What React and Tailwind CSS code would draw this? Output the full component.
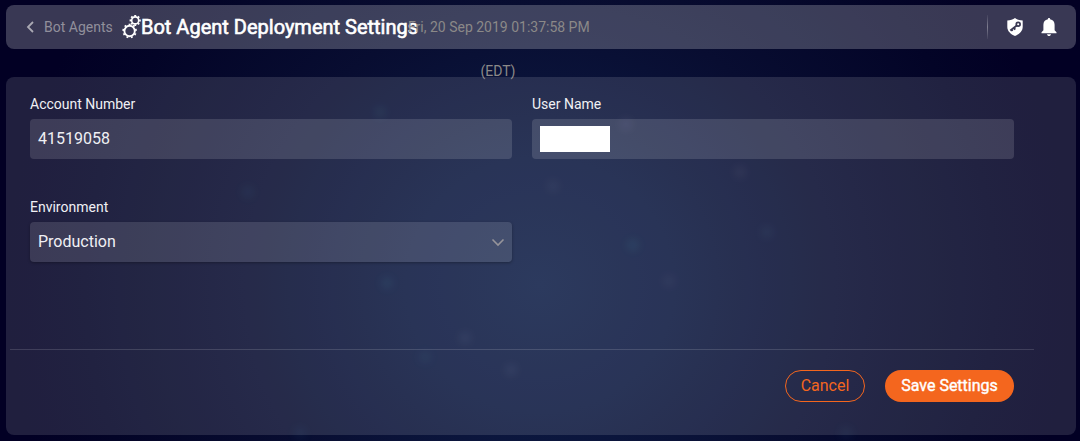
import React from 'react';

function Gear({ cx, cy, r, teeth, width }) {
  const marks = Array.from({ length: teeth }, (_, i) => (i * 360) / teeth);
  return (
    <g stroke="currentColor" fill="none">
      <circle cx={cx} cy={cy} r={r} strokeWidth={width} />
      {marks.map((a) => (
        <path
          key={a}
          d={`M${cx} ${cy - r - 0.4}v-1.7`}
          strokeWidth="2"
          transform={`rotate(${a} ${cx} ${cy})`}
        />
      ))}
    </g>
  );
}

function GearsIcon() {
  return (
    <svg className="h-6 w-[19px] shrink-0" viewBox="0 0 19 24">
      <Gear cx={7.6} cy={16} r={5.2} teeth={9} width={1.9} />
      <Gear cx={13.200} cy={5.400} r={3.500} teeth={8} width={1.600} />
    </svg>
  );
}

function ShieldIcon() {
  return (
    <svg className="h-[18px] w-4" viewBox="0 0 16 18">
      <path d="M8 0 C6 1.6 3.2 2.2 0.3 2.4 V9 C0.3 13 3.6 16.2 8 18 C12.400 16.2 15.700 13 15.700 9 V2.400 C12.800 2.200 10 1.600 8 0Z" fill="white" />
      <g fill="none" stroke="#3a3853">
        <circle cx="11.200" cy="6.200" r="1.900" strokeWidth="1.700" />
        <path d="M9.800 7.600 3.300 12.400M6.900 9.900l1.300 1.700M4.500 11.600l1 1.400" strokeWidth="1.900" />
      </g>
    </svg>
  );
}

function BellIcon() {
  return (
    <svg className="h-[18px] w-4" viewBox="0 0 16 18" fill="white">
      <path d="M8 0C7.300 0 6.900.5 6.900 1.200 4 1.700 2.400 3.800 2.400 6.700V12.200L.5 14.200V15.200H15.500V14.200L13.600 12.200V6.700C13.600 3.800 12 1.700 9.100 1.200 9.100.5 8.700 0 8 0ZM6 16.200C6.200 17.300 7 18 8 18S9.800 17.300 10 16.200Z" />
    </svg>
  );
}

function Header() {
  return (
    <header className="flex h-11 items-center rounded-lg bg-white/22 pl-[19px] pr-[19px]">
      <a className="flex w-[97px] shrink-0 items-center text-[14px] text-[#918f9b]">
        <svg className="mr-[9px] h-3 w-[10px]" viewBox="0 0 10 12" fill="none" stroke="#aaa9b3" strokeWidth="1.8">
          <path d="M8 1 3 6l5 5" />
        </svg>
        <span className="whitespace-nowrap">Bot Agents</span>
      </a>
      <h1 className="flex shrink-0 items-center whitespace-nowrap text-[20px] text-white">
        <GearsIcon />
        <span className="w-[277px] [-webkit-text-stroke:0.600px_white]">Bot Agent Deployment Settings</span>
      </h1>
      <div className="-ml-[10px] h-11 w-[180px] shrink-0 text-center text-[14px] leading-[44px] text-[#8b8988]">
        <div className="whitespace-nowrap">Fri, 20 Sep 2019 01:37:58 PM</div>
        <div>(EDT)</div>
      </div>
      <div className="ml-auto flex items-center">
        <div className="mr-[19px] h-6 w-px bg-linear-to-b from-white/5 via-white/35 to-white/5" />
        <ShieldIcon />
        <div className="w-[18px]" />
        <BellIcon />
      </div>
    </header>
  );
}

function Field({ label, children }) {
  return (
    <div className="w-[482px]">
      <div className="h-6 text-[14px] leading-[18px] text-[#f0f0f4]">{label}</div>
      {children}
    </div>
  );
}

const specks = [
  [380, 112, '#25728a'], [248, 192, '#25628a'], [387, 283, '#2589a0'],
  [465, 338, '#76719a'], [511, 370, '#76719a'], [425, 357, '#25728a'],
  [626, 124, '#76719a'], [740, 172, '#66628a'], [553, 186, '#66628a'],
  [633, 245, '#2589a0'], [767, 232, '#39628a'], [669, 281, '#66628a'],
  [300, 433, '#25628a'], [846, 433, '#25628a'],
];

function Backdrop() {
  return (
    <svg className="absolute inset-0 h-full w-full" viewBox="0 0 1080 441">
      <defs>
        <radialGradient id="glow" gradientUnits="userSpaceOnUse" cx="540" cy="285" r="535" gradientTransform="translate(540 285) scale(1 .95) translate(-540 -285)">
          <stop offset="0" stopColor="#0f1f48" />
          <stop offset=".25" stopColor="#0c1840" />
          <stop offset=".55" stopColor="#080d31" />
          <stop offset=".85" stopColor="#030427" />
          <stop offset="1" stopColor="#020024" />
        </radialGradient>
        <filter id="soft" x="-2" y="-2" width="5" height="5">
          <feGaussianBlur stdDeviation="4" />
        </filter>
      </defs>
      <rect width="1080" height="441" fill="url(#glow)" />
      {specks.map(([x, y, color]) => (
        <circle key={`${x}-${y}`} cx={x} cy={y} r="6" fill={color} opacity=".12" filter="url(#soft)" />
      ))}
    </svg>
  );
}

export default function App() {
  return (
    <div className="relative h-[441px] w-[1080px] overflow-hidden bg-[#020024] font-[Roboto,sans-serif]">
      <Backdrop />
      <div className="relative flex flex-col gap-7 pl-[6px] pr-1 pt-[5px]">
        <Header />
        <main className="h-[358px] rounded-lg bg-white/12 pt-[18px]">
          <div className="grid grid-cols-[482px_482px] gap-x-5 gap-y-[39px] pl-6">
            <Field label="Account Number">
              <div className="flex h-10 items-center rounded bg-white/13 px-2 text-[16px] text-[#f0f0f4]">41519058</div>
            </Field>
            <Field label="User Name">
              <div className="flex h-10 items-center rounded bg-white/13 px-2">
                <div className="h-[26px] w-[70px] bg-white" />
              </div>
            </Field>
            <Field label="Environment">
              <div className="flex h-10 items-center justify-between rounded bg-white/12 pl-2 pr-[7px] text-[16px] text-[#f0f0f4] shadow-[0_1px_3px_rgba(0,0,0,.3)]">
                <span>Production</span>
                <svg className="h-4 w-[14px]" viewBox="0 0 14 16" fill="none" stroke="#96949a" strokeWidth="1.6">
                  <path d="m1.500 5.500 5.500 5.500 5.500-5.500" />
                </svg>
              </div>
            </Field>
          </div>
          <div className="ml-1 mt-[87px] h-px w-[1024px] bg-white/14" />
          <div className="mr-[62px] mt-5 flex justify-end gap-5 text-[16px]">
            <button className="h-8 w-20 rounded-full border border-[#f4661e] text-[#f4661e]">Cancel</button>
            <button className="h-8 w-[129px] rounded-full bg-[#f4661e] text-white [-webkit-text-stroke:0.400px_white]">Save Settings</button>
          </div>
        </main>
      </div>
    </div>
  );
}
